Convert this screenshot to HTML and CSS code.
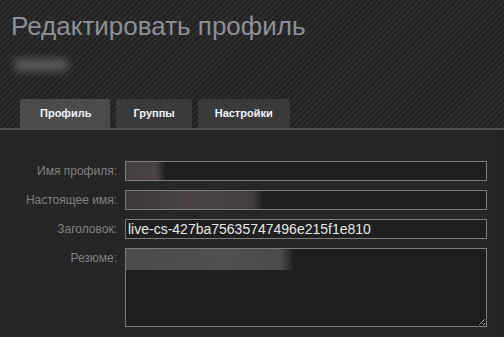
FILE: index.html
```html
<!DOCTYPE html>
<html lang="ru">
<head>
  <meta charset="UTF-8" />
  <title>Редактировать профиль</title>
  <link rel="stylesheet" href="styles.css">
</head>
<body>

  <div class="header">
    <h1>Редактировать профиль</h1>
    <div class="nickname"><span></span></div>
  </div>

  <div class="tabs">
    <a class="tab active" href="#">Профиль</a>
    <a class="tab" href="#">Группы</a>
    <a class="tab" href="#">Настройки</a>
  </div>

  <div class="panel">
    <div class="panel-inner">
      <form class="profile-form">
        <label for="personaName">Имя профиля:</label>
        <input id="personaName" class="field smudge-short" type="text" value="">

        <label for="realName">Настоящее имя:</label>
        <input id="realName" class="field smudge-long" type="text" value="">

        <label for="headline">Заголовок:</label>
        <input id="headline" class="field" type="text" value="live-cs-427ba75635747496e215f1e810">

        <label for="summary">Резюме:</label>
        <textarea id="summary" class="field area"></textarea>
      </form>
    </div>
  </div>

</body>
</html>
```

FILE: styles.css
```css
body {
  margin: 0;
  padding: 0;
  font-family: "Liberation Sans", Arial, sans-serif;
  background-color: #2a2a2a;
  background-image: repeating-linear-gradient(135deg, #2d2d2d 0px, #2d2d2d 2px, #222 2px, #222 4px);
  height: 337px;
  overflow: hidden;
}

.header {
  padding: 11px 12px 0 11px;
  height: 87px;
  box-sizing: border-box;
}

.header h1 {
  margin: 0;
  font-size: 26px;
  font-weight: normal;
  color: #8d9096;
  line-height: 30px;
}

.nickname {
  margin: 12px 0 0 -2px;
  width: 66px;
  height: 24px;
  overflow: hidden;
  display: flex;
  align-items: center;
  padding-left: 6px;
  box-sizing: border-box;
}

.nickname span {
  display: block;
  width: 52px;
  height: 12px;
  background: #5c5c5c;
  filter: blur(4px);
}

.tabs {
  display: flex;
  gap: 6px;
  padding-left: 20px;
  margin-top: 12px;
}

.tab {
  display: block;
  height: 29px;
  line-height: 29px;
  padding: 0 17px;
  background-color: #3a3a3a;
  border-radius: 3px 3px 0 0;
  color: #f2f4f8;
  font-size: 11px;
  font-weight: bold;
  text-decoration: none;
}

.tab.active {
  padding: 0 19px 0 20px;
  background-color: #4b4b4b;
}

.panel {
  border-top: 2px solid #505050;
  background-color: #222;
  height: 220px;
}

.panel-inner {
  margin-right: 7px;
  background-color: #262626;
  height: 100%;
  padding-top: 31px;
  box-sizing: border-box;
}

.profile-form {
  display: grid;
  grid-template-columns: 117px 362px;
  column-gap: 8px;
  row-gap: 9px;
}

.profile-form label {
  text-align: right;
  font-size: 12px;
  color: #808080;
  line-height: 20px;
}

.field {
  box-sizing: border-box;
  height: 20px;
  margin: 0;
  padding: 0 2px;
  border: 1px solid #7c7c7c;
  background-color: #1e1e1e;
  color: #e8e8e8;
  font-family: "Liberation Sans", Arial, sans-serif;
  font-size: 14px;
  outline: none;
}

.smudge-short {
  background-image: linear-gradient(to right, #463f41 0px, #4a4244 30px, #1e1e1e 40px);
}

.smudge-long {
  background-image: linear-gradient(to right, #403a3b 0px, #4a4244 60px, #463f40 125px, #1e1e1e 138px);
}

.area {
  height: 79px;
  resize: both;
  background-image: linear-gradient(to right, #4a4a4a 0px, #505050 100px, #4a4a4a 155px, #1e1e1e 168px);
  background-size: 100% 21px;
  background-repeat: no-repeat;
}
```
